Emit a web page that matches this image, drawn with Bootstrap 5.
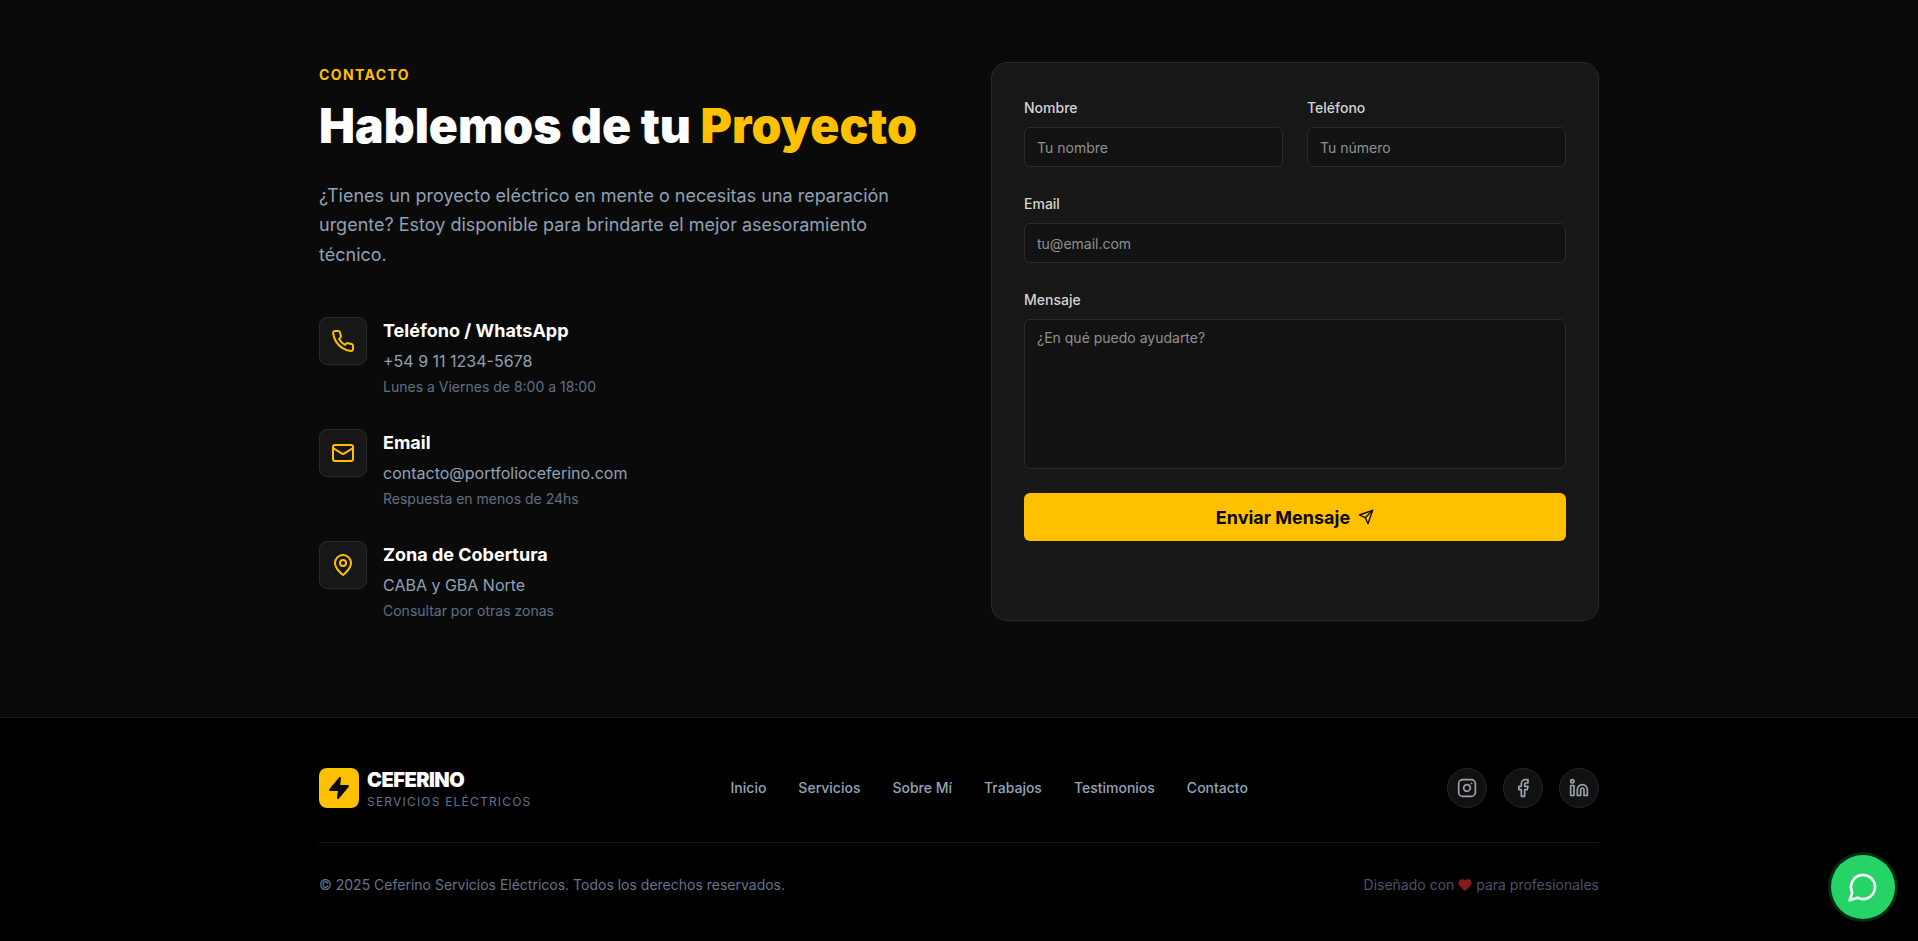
<!DOCTYPE html>
<html lang="es">
<head>
  <meta charset="UTF-8">
  <title>Ceferino Servicios Eléctricos - Contacto</title>
  <link href="https://cdn.jsdelivr.net/npm/bootstrap@5.3.3/dist/css/bootstrap.min.css" rel="stylesheet">
  <style>
    body {
      background-color: #0a0a0a;
      font-family: "Inter", "Liberation Sans", sans-serif;
      color: #fff;
    }
    .wrap {
      width: 1280px;
      margin: 0 auto;
    }
    .contact-section {
      height: 717px;
      padding-top: 62px;
    }
    .contact-row {
      --bs-gutter-x: 64px;
    }
    .eyebrow {
      color: #ffc000;
      font-size: 14px;
      font-weight: 700;
      letter-spacing: 0.1em;
      line-height: 20px;
      padding-top: 3px;
      margin-bottom: 11px;
    }
    .main-title {
      font-size: 48px;
      font-weight: 900;
      line-height: 60px;
      letter-spacing: 0;
      margin-bottom: 25px;
    }
    .accent {
      color: #ffc000;
    }
    .intro {
      color: #90a1b3;
      font-size: 18px;
      line-height: 29.25px;
      margin-bottom: 48px;
    }
    .info-item {
      display: flex;
      gap: 16px;
      margin-bottom: 32px;
    }
    .info-icon {
      flex: 0 0 48px;
      width: 48px;
      height: 48px;
      background: #171717;
      border: 1px solid #2a2a2a;
      border-radius: 8px;
      color: #ffc000;
    }
    .info-title {
      font-size: 18px;
      font-weight: 700;
      line-height: 28px;
      margin: 0 0 4px;
    }
    .info-value {
      color: #90a1b3;
      font-size: 16px;
      line-height: 24px;
      margin: 0 0 4px;
    }
    .info-note {
      color: #5f7085;
      font-size: 14px;
      line-height: 20px;
      margin: 0;
    }
    .form-panel {
      background: #171717;
      border: 1px solid #2a2a2a;
      border-radius: 16px;
      padding: 35px 32px 79px;
      height: 559px;
    }
    .field-label {
      display: block;
      color: #d4d4d4;
      font-size: 14px;
      font-weight: 500;
      line-height: 20px;
      margin-bottom: 9px;
    }
    .field-input {
      display: block;
      width: 100%;
      height: 40px;
      background: #121212;
      border: 1px solid #2a2a2a;
      border-radius: 6px;
      color: #fff;
      font-family: inherit;
      font-size: 14px;
      padding: 8px 12px;
      outline: none;
    }
    .field-input::placeholder {
      color: #919191;
      opacity: 1;
    }
    textarea.field-input {
      height: 150px;
      padding-top: 7px;
      resize: none;
    }
    .field-gap {
      margin-bottom: 27px;
    }
    .send-btn {
      width: 100%;
      height: 48px;
      background: #ffc000;
      border: 0;
      border-radius: 6px;
      color: #0a0a0a;
      font-size: 18px;
      font-weight: 700;
      margin-top: 24px;
    }
    .site-footer {
      background: #000;
      border-top: 1px solid #1a1a1a;
      height: 224px;
      padding-top: 50px;
    }
    .top-row {
      height: 40px;
    }
    .logo-box {
      width: 40px;
      height: 40px;
      background: #ffc000;
      border-radius: 8px;
      color: #0a0a0a;
    }
    .logo-text {
      height: 40px;
    }
    .logo-name {
      font-size: 20px;
      font-weight: 900;
      line-height: 24px;
      letter-spacing: -0.025em;
    }
    .logo-sub {
      color: #64748b;
      font-size: 12px;
      line-height: 16px;
      letter-spacing: 0.1em;
      margin-top: 2px;
    }
    .foot-nav {
      column-gap: 32px;
    }
    .foot-link {
      color: #94a3b8;
      font-size: 14px;
      font-weight: 500;
      line-height: 20px;
      text-decoration: none;
    }
    .social-link {
      width: 40px;
      height: 40px;
      background: #111;
      border: 1px solid #262626;
      border-radius: 50%;
      color: #9ca3af;
    }
    .foot-bottom {
      border-top: 1px solid #1a1a1a;
      margin-top: 34px;
      padding-top: 32px;
      font-size: 14px;
      line-height: 20px;
      color: #64748b;
    }
    .foot-credit {
      color: #475569;
    }
    .heart {
      color: #7f1d1d;
      vertical-align: -2px;
    }
    .wa-float {
      position: fixed;
      right: 23px;
      bottom: 22px;
      width: 64px;
      height: 64px;
      background: #25d366;
      border-radius: 50%;
      box-shadow: 0 0 0 3px rgba(37, 211, 102, 0.2);
      color: #fff;
    }
  </style>
</head>
<body>

  <!-- Contacto -->
  <section class="contact-section">
    <div class="wrap">
      <div class="row contact-row">
        <div class="col-6">
          <div class="eyebrow">CONTACTO</div>
          <h2 class="main-title">Hablemos de tu <span class="accent">Proyecto</span></h2>
          <p class="intro">¿Tienes un proyecto eléctrico en mente o necesitas una reparación urgente? Estoy disponible para brindarte el mejor asesoramiento técnico.</p>

          <div class="info-item">
            <div class="info-icon d-flex align-items-center justify-content-center">
              <svg width="24" height="24" viewBox="0 0 24 24" fill="none" stroke="currentColor" stroke-width="2" stroke-linecap="round" stroke-linejoin="round"><path d="M22 16.92v3a2 2 0 0 1-2.18 2 19.79 19.79 0 0 1-8.63-3.07 19.5 19.5 0 0 1-6-6 19.79 19.79 0 0 1-3.07-8.67A2 2 0 0 1 4.11 2h3a2 2 0 0 1 2 1.72 12.84 12.84 0 0 0 .7 2.81 2 2 0 0 1-.45 2.11L8.09 9.91a16 16 0 0 0 6 6l1.27-1.27a2 2 0 0 1 2.11-.45 12.84 12.84 0 0 0 2.81.7A2 2 0 0 1 22 16.92z"/></svg>
            </div>
            <div>
              <h3 class="info-title">Teléfono / WhatsApp</h3>
              <p class="info-value">+54 9 11 1234-5678</p>
              <p class="info-note">Lunes a Viernes de 8:00 a 18:00</p>
            </div>
          </div>

          <div class="info-item">
            <div class="info-icon d-flex align-items-center justify-content-center">
              <svg width="24" height="24" viewBox="0 0 24 24" fill="none" stroke="currentColor" stroke-width="2" stroke-linecap="round" stroke-linejoin="round"><rect x="2" y="4" width="20" height="16" rx="2"/><path d="m22 7-8.97 5.7a1.94 1.94 0 0 1-2.06 0L2 7"/></svg>
            </div>
            <div>
              <h3 class="info-title">Email</h3>
              <p class="info-value">contacto@portfolioceferino.com</p>
              <p class="info-note">Respuesta en menos de 24hs</p>
            </div>
          </div>

          <div class="info-item">
            <div class="info-icon d-flex align-items-center justify-content-center">
              <svg width="24" height="24" viewBox="0 0 24 24" fill="none" stroke="currentColor" stroke-width="2" stroke-linecap="round" stroke-linejoin="round"><path d="M20 10c0 6-8 12-8 12s-8-6-8-12a8 8 0 0 1 16 0Z"/><circle cx="12" cy="10" r="3"/></svg>
            </div>
            <div>
              <h3 class="info-title">Zona de Cobertura</h3>
              <p class="info-value">CABA y GBA Norte</p>
              <p class="info-note">Consultar por otras zonas</p>
            </div>
          </div>
        </div>

        <div class="col-6">
          <form class="form-panel">
            <div class="row gx-4 field-gap">
              <div class="col-6">
                <label class="field-label" for="nombre">Nombre</label>
                <input class="field-input" id="nombre" type="text" placeholder="Tu nombre">
              </div>
              <div class="col-6">
                <label class="field-label" for="telefono">Teléfono</label>
                <input class="field-input" id="telefono" type="text" placeholder="Tu número">
              </div>
            </div>
            <div class="field-gap">
              <label class="field-label" for="email">Email</label>
              <input class="field-input" id="email" type="email" placeholder="tu@email.com">
            </div>
            <div>
              <label class="field-label" for="mensaje">Mensaje</label>
              <textarea class="field-input" id="mensaje" placeholder="¿En qué puedo ayudarte?"></textarea>
            </div>
            <button type="button" class="send-btn d-flex align-items-center justify-content-center gap-2">
              Enviar Mensaje
              <svg width="16" height="16" viewBox="0 0 24 24" fill="none" stroke="currentColor" stroke-width="2" stroke-linecap="round" stroke-linejoin="round"><path d="m22 2-7 20-4-9-9-4Z"/><path d="M22 2 11 13"/></svg>
            </button>
          </form>
        </div>
      </div>
    </div>
  </section>

  <!-- Footer -->
  <footer class="site-footer">
    <div class="wrap">
      <div class="top-row d-flex align-items-center justify-content-between">
        <div class="d-flex align-items-center gap-2">
          <div class="logo-box d-flex align-items-center justify-content-center">
            <svg width="24" height="24" viewBox="0 0 24 24" fill="currentColor" stroke="currentColor" stroke-width="2" stroke-linecap="round" stroke-linejoin="round"><path d="M13 2 3 14h9l-1 8 10-12h-9l1-8z"/></svg>
          </div>
          <div class="logo-text">
            <div class="logo-name">CEFERINO</div>
            <div class="logo-sub">SERVICIOS ELÉCTRICOS</div>
          </div>
        </div>
        <nav class="foot-nav d-flex">
          <a class="foot-link" href="#">Inicio</a>
          <a class="foot-link" href="#">Servicios</a>
          <a class="foot-link" href="#">Sobre Mí</a>
          <a class="foot-link" href="#">Trabajos</a>
          <a class="foot-link" href="#">Testimonios</a>
          <a class="foot-link" href="#">Contacto</a>
        </nav>
        <div class="d-flex gap-3">
          <a class="social-link d-flex align-items-center justify-content-center" href="#">
            <svg width="20" height="20" viewBox="0 0 24 24" fill="none" stroke="currentColor" stroke-width="2" stroke-linecap="round" stroke-linejoin="round"><rect x="2" y="2" width="20" height="20" rx="5"/><path d="M16 11.37A4 4 0 1 1 12.63 8 4 4 0 0 1 16 11.37z"/><line x1="17.5" y1="6.5" x2="17.51" y2="6.5"/></svg>
          </a>
          <a class="social-link d-flex align-items-center justify-content-center" href="#">
            <svg width="20" height="20" viewBox="0 0 24 24" fill="none" stroke="currentColor" stroke-width="2" stroke-linecap="round" stroke-linejoin="round"><path d="M18 2h-3a5 5 0 0 0-5 5v3H7v4h3v8h4v-8h3l1-4h-4V7a1 1 0 0 1 1-1h3z"/></svg>
          </a>
          <a class="social-link d-flex align-items-center justify-content-center" href="#">
            <svg width="20" height="20" viewBox="0 0 24 24" fill="none" stroke="currentColor" stroke-width="2" stroke-linecap="round" stroke-linejoin="round"><path d="M16 8a6 6 0 0 1 6 6v7h-4v-7a2 2 0 0 0-2-2 2 2 0 0 0-2 2v7h-4v-7a6 6 0 0 1 6-6z"/><rect x="2" y="9" width="4" height="12"/><circle cx="4" cy="4" r="2"/></svg>
          </a>
        </div>
      </div>
      <div class="foot-bottom d-flex justify-content-between">
        <span>© 2025 Ceferino Servicios Eléctricos. Todos los derechos reservados.</span>
        <span class="foot-credit">Diseñado con
          <svg class="heart" width="14" height="14" viewBox="0 0 24 24" fill="currentColor" stroke="currentColor" stroke-width="2" stroke-linecap="round" stroke-linejoin="round"><path d="M20.84 4.61a5.5 5.5 0 0 0-7.78 0L12 5.67l-1.06-1.06a5.5 5.5 0 0 0-7.78 7.78L12 21.23l8.84-8.84a5.5 5.5 0 0 0 0-7.78z"/></svg>
          para profesionales</span>
      </div>
    </div>
  </footer>

  <a class="wa-float d-flex align-items-center justify-content-center" href="#">
    <svg width="32" height="32" viewBox="0 0 24 24" fill="none" stroke="currentColor" stroke-width="2" stroke-linecap="round" stroke-linejoin="round"><path d="M7.9 20A9 9 0 1 0 4 16.1L2 22Z"/></svg>
  </a>

  <script src="https://cdn.jsdelivr.net/npm/bootstrap@5.3.3/dist/js/bootstrap.bundle.min.js"></script>
</body>
</html>
